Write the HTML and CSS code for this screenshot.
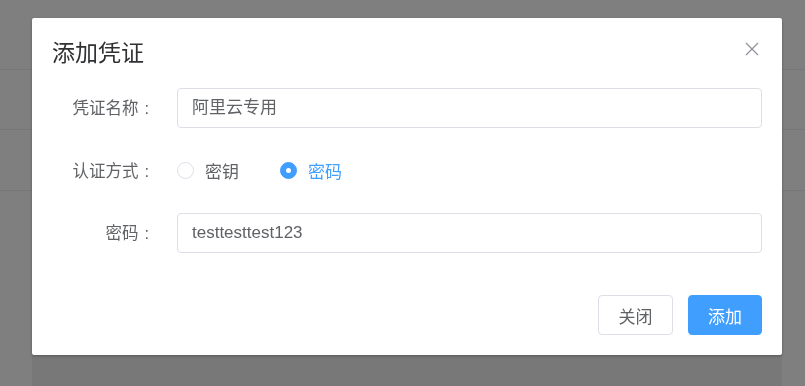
FILE: index.html
```html
<!DOCTYPE html>
<html lang="zh-CN">
<head>
<meta charset="utf-8">
<title>添加凭证</title>
<link rel="stylesheet" href="styles.css">
</head>
<body>
<div class="page">
  <div class="row r1"></div>
  <div class="row r2"></div>
  <div class="row r3"></div>
</div>
<div class="mask">
  <div class="dialog">
    <div class="dialog-header">
      <span class="dialog-title">添加凭证</span>
      <button class="close-btn" aria-label="关闭">
        <svg width="14" height="14" viewBox="0 0 14 14"><path d="M1 1 L13 13 M13 1 L1 13" stroke="#909399" stroke-width="1.3" fill="none"/></svg>
      </button>
    </div>
    <div class="dialog-body">
      <div class="form-item">
        <label class="form-label">凭证名称<span class="colon">:</span></label>
        <div class="form-content"><div class="input">阿里云专用</div></div>
      </div>
      <div class="form-item radio-item">
        <label class="form-label">认证方式<span class="colon">:</span></label>
        <div class="form-content radios">
          <span class="radio"><span class="radio-circle"></span><span class="radio-text">密钥</span></span>
          <span class="radio checked"><span class="radio-circle"></span><span class="radio-text">密码</span></span>
        </div>
      </div>
      <div class="form-item">
        <label class="form-label">密码<span class="colon">:</span></label>
        <div class="form-content"><div class="input">testtesttest123</div></div>
      </div>
    </div>
    <div class="dialog-footer">
      <button class="btn">关闭</button>
      <button class="btn primary">添加</button>
    </div>
  </div>
</div>
</body>
</html>
```
FILE: styles.css
```css
* { box-sizing: border-box; }
html, body { margin: 0; padding: 0; }
body {
  width: 805px;
  height: 386px;
  overflow: hidden;
  background: #ffffff;
  font-family: "Liberation Sans", "Noto Sans CJK SC", sans-serif;
  position: relative;
}
.page { width: 100%; }
.row { border-bottom: 1px solid #ebeef5; }
.r1 { height: 70px; }
.r2 { height: 60px; }
.r3 { height: 61px; }

.mask {
  position: fixed;
  inset: 0;
  background: rgba(0, 0, 0, 0.5);
  display: flex;
  align-items: flex-start;
}
.dialog {
  margin: 18px 0 0 32px;
  width: 750px;
  background: #ffffff;
  border-radius: 2px;
  box-shadow: 0 40px 0 rgba(0, 0, 0, 0.06), 0 1px 3px rgba(0, 0, 0, 0.3);
}
.dialog-header {
  display: flex;
  justify-content: space-between;
  align-items: flex-start;
  padding: 20px 23px 0 20px;
}
.dialog-title {
  font-size: 23px;
  line-height: 30px;
  color: #303133;
}
.close-btn {
  margin-top: 4px;
  padding: 0;
  border: 0;
  background: none;
  width: 14px;
  height: 14px;
  display: flex;
}
.dialog-body {
  padding: 20px 20px 0 20px;
  display: flex;
  flex-direction: column;
  gap: 22px;
}
.form-item {
  display: flex;
  align-items: center;
  height: 40px;
}
.radio-item { height: 41px; }
.form-label {
  width: 125px;
  padding-right: 28px;
  text-align: right;
  font-size: 16.5px;
  color: #606266;
  line-height: 40px;
  white-space: nowrap;
}
.colon { margin-left: 6px; }
.form-content { flex: 1; }
.input {
  height: 40px;
  border: 1px solid #dcdfe6;
  border-radius: 4px;
  padding: 0 14px;
  font-size: 17px;
  line-height: 38px;
  color: #606266;
}
.radios { display: flex; align-items: center; }
.radio {
  display: flex;
  align-items: center;
  margin-right: 41px;
  font-size: 17px;
  color: #606266;
}
.radio-circle {
  width: 17px;
  height: 17px;
  border: 1px solid #dcdfe6;
  border-radius: 50%;
  background: #fff;
  margin-right: 11px;
  display: flex;
  align-items: center;
  justify-content: center;
}
.radio.checked .radio-circle {
  background: #409eff;
  border-color: #409eff;
}
.radio.checked .radio-circle::after {
  content: "";
  width: 5px;
  height: 5px;
  border-radius: 50%;
  background: #fff;
}
.radio.checked .radio-text { color: #409eff; }
.dialog-footer {
  display: flex;
  justify-content: flex-end;
  gap: 15px;
  padding: 42px 20px 20px 20px;
}
.btn {
  height: 40px;
  padding: 0;
  border: 1px solid #dcdfe6;
  border-radius: 4px;
  background: #fff;
  color: #606266;
  font-family: "Liberation Sans", "Noto Sans CJK SC", sans-serif;
  font-size: 17px;
  width: 75px;
  white-space: nowrap;
}
.btn.primary {
  background: #409eff;
  border-color: #409eff;
  color: #fff;
  width: 74px;
}
```
